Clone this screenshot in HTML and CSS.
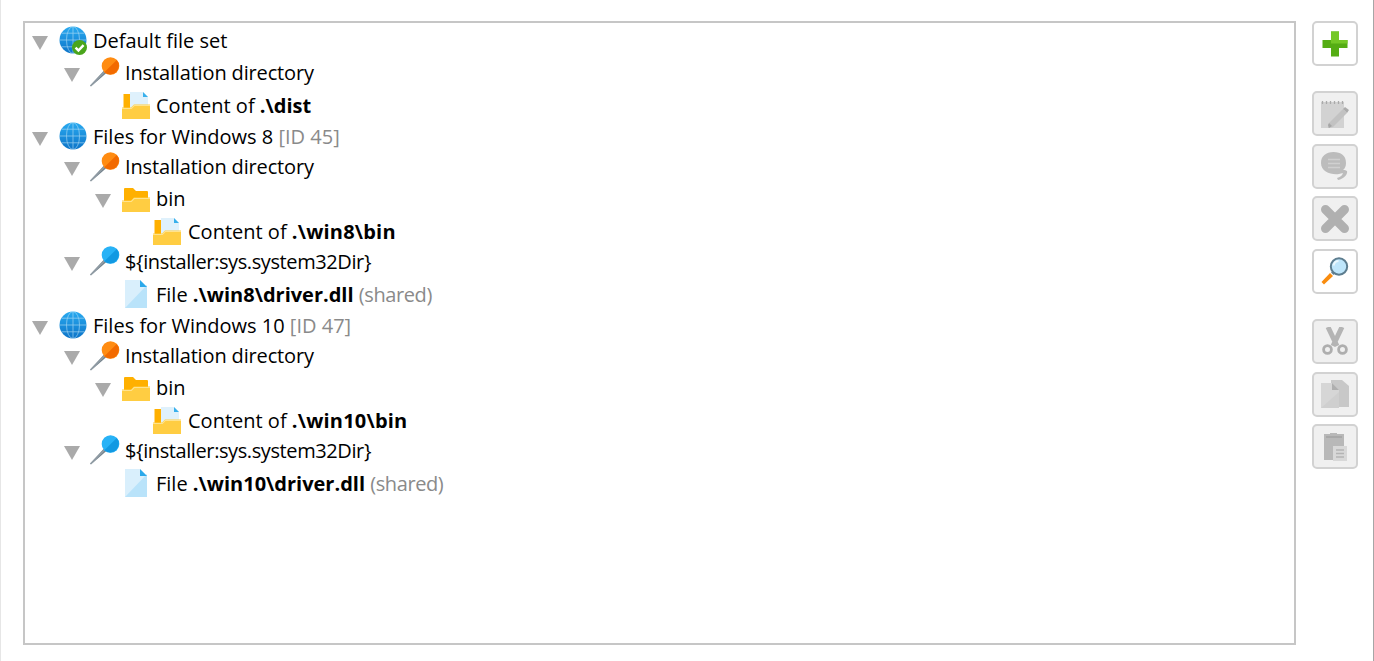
FILE: index.html
```html
<!DOCTYPE html>
<html lang="en">
<head>
<meta charset="utf-8">
<title>File sets</title>
<link rel="stylesheet" href="styles.css">
</head>
<body>
<svg class="defs" width="0" height="0" aria-hidden="true">
  <defs>
    <linearGradient id="gb" x1="0" y1="0" x2="0" y2="1"><stop offset="0" stop-color="#29aaf0"/><stop offset="1" stop-color="#0d74c8"/></linearGradient>
    <symbol id="globe" viewBox="0 0 28 28">
      <circle cx="14" cy="14" r="13.500" fill="url(#gb)"/>
      <g fill="none" stroke="#bfe4f8" stroke-width=".8" opacity=".7">
        <ellipse cx="14" cy="14" rx="6.500" ry="13.500"/>
        <path d="M14 .5v27M.5 14h27M2.600 7.200h22.800M2.600 20.800h22.800"/>
      </g>
    </symbol>
    <symbol id="pin-o" viewBox="0 0 30 30">
      <path d="M0 28.500 14.500 13 17 15.500 1 29.500z" fill="#76848e"/>
      <path d="M.7 28.800 15.500 14" stroke="#b4bdc3" stroke-width=".8"/>
      <circle cx="20.500" cy="9" r="8.800" fill="#ff8c12"/>
      <path d="M26.800 3A8.800 8.800 0 0 1 14.300 15.300z" fill="#f26a00"/>
    </symbol>
    <symbol id="pin-b" viewBox="0 0 30 30">
      <path d="M0 28.500 14.500 13 17 15.500 1 29.500z" fill="#76848e"/>
      <path d="M.7 28.800 15.500 14" stroke="#b4bdc3" stroke-width=".8"/>
      <circle cx="20.500" cy="9" r="8.800" fill="#28b2f6"/>
      <path d="M26.800 3A8.800 8.800 0 0 1 14.300 15.300z" fill="#1299e2"/>
    </symbol>
    <symbol id="folder" viewBox="0 0 28 24">
      <path d="M2 1q0-1 1-1h8l3 3h11q1 0 1 1v10H2z" fill="#ffb000"/>
      <path d="M0 24V12.500h9l3-3h16V24z" fill="#ffcd42"/>
      <path d="M0 13h9l3-3h16v1H12.500l-3 3H0z" fill="#ffe38e"/>
    </symbol>
    <symbol id="content" viewBox="0 0 28 27">
      <path d="M1.500 2h7v14h-7z" fill="#ffb000"/>
      <path d="M8 0h13l5 5v11H8z" fill="#dff1fc"/>
      <path d="M21 0l5 5h-5z" fill="#38b0ec"/>
      <path d="M0 27V15.500h9l3-3h16V27z" fill="#ffcd42"/>
      <path d="M0 16h9l3-3h16v1H12.500l-3 3H0z" fill="#ffe38e"/>
    </symbol>
    <symbol id="file" viewBox="0 0 22 28">
      <path d="M0 0h15l7 7v21H0z" fill="#d9effc"/>
      <path d="M0 28 22 5v23z" fill="#b9e3fa"/>
      <path d="M15 0l7 7h-7z" fill="#2aa8ea"/>
    </symbol>
  </defs>
</svg>

<main class="panel">
  <section class="tree">
    <div class="row r1"><span class="tri"></span><span class="icon"><svg class="i-globe"><use href="#globe"/></svg><svg class="badge" viewBox="0 0 14 14"><circle cx="7" cy="7" r="7" fill="#4aa51c"/><path d="M3.300 7.200 6 9.800l4.800-5" fill="none" stroke="#fff" stroke-width="2.300"/></svg></span><span class="label">Default file set</span></div>
    <div class="row r2 d1"><span class="tri"></span><span class="icon"><svg class="i-pin"><use href="#pin-o"/></svg></span><span class="label dirname">Installation directory</span></div>
    <div class="row r3 d2"><span class="tri none"></span><span class="icon"><svg class="i-folder"><use href="#content"/></svg></span><span class="label">Content of <b>.\dist</b></span></div>

    <div class="row r4"><span class="tri"></span><span class="icon"><svg class="i-globe"><use href="#globe"/></svg></span><span class="label">Files for Windows 8 <em>[ID 45]</em></span></div>
    <div class="row r5 d1"><span class="tri"></span><span class="icon"><svg class="i-pin"><use href="#pin-o"/></svg></span><span class="label dirname">Installation directory</span></div>
    <div class="row r6 d2"><span class="tri"></span><span class="icon"><svg class="i-folder-plain"><use href="#folder"/></svg></span><span class="label">bin</span></div>
    <div class="row r7 d3"><span class="tri none"></span><span class="icon"><svg class="i-folder"><use href="#content"/></svg></span><span class="label">Content of <b>.\win8\bin</b></span></div>
    <div class="row r8 d1"><span class="tri"></span><span class="icon"><svg class="i-pin"><use href="#pin-b"/></svg></span><span class="label varname">${installer:sys.system32Dir}</span></div>
    <div class="row r9 d2"><span class="tri none"></span><span class="icon"><svg class="i-file"><use href="#file"/></svg></span><span class="label">File <b>.\win8\driver.dll</b> <em>(shared)</em></span></div>

    <div class="row r4"><span class="tri"></span><span class="icon"><svg class="i-globe"><use href="#globe"/></svg></span><span class="label">Files for Windows 10 <em>[ID 47]</em></span></div>
    <div class="row r5 d1"><span class="tri"></span><span class="icon"><svg class="i-pin"><use href="#pin-o"/></svg></span><span class="label dirname">Installation directory</span></div>
    <div class="row r6 d2"><span class="tri"></span><span class="icon"><svg class="i-folder-plain"><use href="#folder"/></svg></span><span class="label">bin</span></div>
    <div class="row r7 d3"><span class="tri none"></span><span class="icon"><svg class="i-folder"><use href="#content"/></svg></span><span class="label">Content of <b>.\win10\bin</b></span></div>
    <div class="row r8 d1"><span class="tri"></span><span class="icon"><svg class="i-pin"><use href="#pin-b"/></svg></span><span class="label varname">${installer:sys.system32Dir}</span></div>
    <div class="row r9 d2"><span class="tri none"></span><span class="icon"><svg class="i-file"><use href="#file"/></svg></span><span class="label">File <b>.\win10\driver.dll</b> <em>(shared)</em></span></div>
  </section>

  <aside class="tools">
    <button class="btn" type="button" aria-label="Add"><svg viewBox="0 0 28 28"><path d="M10 1.500h8V10h8.500v8H18v8.500h-8V18H1.500v-8H10z" fill="#55ad14"/><path d="M10 1.500h8V10h8.500v3.500H10z" fill="#74c826"/></svg></button>
    <div class="group">
      <button class="btn off" type="button" aria-label="Edit"><svg viewBox="0 0 28 28"><path d="M0 2h23v26H0z" fill="#d2d2d2"/><path d="M1.500 1v3M5.500 1v3M9.500 1v3M13.500 1v3M17.500 1v3M21.500 1v3" stroke="#aaa" stroke-width="1.300"/><path d="M8 23 22 9l4 4-14 14-5 1z" fill="#c2c2c2"/><path d="M22 9l2-2 4 3-2 3z" fill="#acacac"/><path d="M7 25l1-2 3 3-3 2z" fill="#a6a6a6"/></svg></button>
      <button class="btn off" type="button" aria-label="Comment"><svg viewBox="0 0 28 28"><path d="M12.500 0C20 0 25 3.500 25 11c0 3-1 5.500-3 7 2.500 0 3 .5 4 1 1 3-3 8-9 9l-1-2c3-1 5-2 6-5l-4 1c-8 1-18-2-18-11C0 4 5 0 12.500 0z" fill="#bcbcbc"/><path d="M7 7.500h12M7 11.500h12M7 15.500h12" stroke="#d0d0d0" stroke-width="1.700"/></svg></button>
      <button class="btn off" type="button" aria-label="Delete"><svg viewBox="0 0 28 28"><path d="M4.500 4.500 23.500 23.500M23.500 4.500 4.500 23.500" stroke="#b0b0b0" stroke-width="9" stroke-linecap="round"/></svg></button>
      <button class="btn" type="button" aria-label="Find"><svg viewBox="0 0 28 28"><path d="M.5 25 9 16l3 3-9 8.500z" fill="#f98c0e"/><path d="M10 15.500l1.500-1.500 2.500 2.500-1.500 1.500z" fill="#6b8494"/><circle cx="18" cy="9.500" r="8.200" fill="#bfe6fb" stroke="#5d7d8f" stroke-width="2"/><path d="M12.500 8.500a5.500 5.500 0 0 1 5-4.500" stroke="#ebf8fe" stroke-width="2" fill="none"/></svg></button>
    </div>
    <div class="group">
      <button class="btn off" type="button" aria-label="Cut"><svg viewBox="0 0 28 28"><path d="M7 0 16 19M21 0 12 19" fill="none" stroke="#b4b4b4" stroke-width="5"/><circle cx="6.500" cy="22.500" r="3.900" fill="#f0f0f0" stroke="#aeaeae" stroke-width="2.800"/><circle cx="21.500" cy="22.500" r="3.900" fill="#f0f0f0" stroke="#aeaeae" stroke-width="2.800"/></svg></button>
      <button class="btn off" type="button" aria-label="Copy"><svg viewBox="0 0 28 28"><path d="M10 0h11l7 6v21H10z" fill="#c8c8c8"/><path d="M0 3h11l7 7v18H0z" fill="#d6d6d6"/><path d="M0 28 18 12v16z" fill="#cfcfcf"/><path d="M11 3l7 7h-7z" fill="#afafaf"/></svg></button>
      <button class="btn off" type="button" aria-label="Paste"><svg viewBox="0 0 28 28"><path d="M3 1h6V0h7v1h7v26H3z" fill="#b8b8b8"/><path d="M5 3h16v2H5z" fill="#a8a8a8"/><path d="M12 13h14v15H12z" fill="#d8d8d8"/><path d="M15 17h8M15 20.500h8M15 24h8" stroke="#b4b4b4" stroke-width="1.300"/></svg></button>
    </div>
  </aside>
</main>
</body>
</html>
```
FILE: styles.css
```css
* { box-sizing: border-box; }
html, body { margin: 0; height: 100%; }
body {
  background: #fff;
  font-family: "Open Sans", "Noto Sans", sans-serif;
  font-size: 20px;
  color: #000;
  overflow: hidden;
}
.defs { position: absolute; }
.panel {
  height: 661px;
  display: flex;
  align-items: flex-start;
  gap: 16px;
  padding: 21px 15px 0 22px;
  border-left: 1px solid #e6e6e6;
  border-right: 1px solid #a6a6a6;
}
.tree {
  flex: 1;
  height: 624px;
  border: 2px solid #c6c6c6;
  padding: 1px 0 0 5px;
}
.row {
  display: flex;
  align-items: center;
  height: 32px;
  white-space: nowrap;
}
.r3 { margin-top: 1px; }
.r4 { margin-top: -1px; }
.r5 { margin-top: -2px; }
.r6 { margin-top: 0; }
.r7 { margin-top: 1px; }
.r8 { margin-top: -2px; }
.r9 { margin-top: 1px; }
.d1 { padding-left: 32px; }
.d2 { padding-left: 63px; }
.d3 { padding-left: 95px; }
.tri {
  width: 0;
  height: 0;
  flex: none;
  margin: 5px 2px 0;
  border-left: 8px solid transparent;
  border-right: 8px solid transparent;
  border-top: 14px solid #aaa;
}
.tri.none { border-top-color: transparent; }
.icon {
  position: relative;
  flex: none;
  width: 30px;
  height: 30px;
  margin-left: 8px;
  display: flex;
  align-items: center;
  justify-content: center;
}
.d3 .icon { margin-left: 7px; }
.r6 .icon { margin-top: 4px; }
.r5 .icon { margin-top: 2px; }
.label { margin-left: 5px; }
.d3 .label { margin-left: 6px; }
.dirname { letter-spacing: -0.15px; }
.varname { letter-spacing: -0.4px; }
b { font-weight: 700; }
.r7 b { letter-spacing: 0.2px; }
em { font-style: normal; color: #8a8a8a; }
.r9 em { letter-spacing: -0.4px; }
.i-globe { width: 28px; height: 28px; }
.i-pin { width: 30px; height: 30px; }
.i-folder { width: 28px; height: 27px; }
.i-folder-plain { width: 28px; height: 24px; }
.i-file { width: 22px; height: 28px; }
.badge {
  position: absolute;
  right: 1px;
  bottom: 0;
  width: 15px;
  height: 15px;
}
.tools {
  flex: none;
  width: 46px;
  display: flex;
  flex-direction: column;
  gap: 25px;
}
.group {
  display: flex;
  flex-direction: column;
  gap: 7.670px;
}
.btn {
  width: 46px;
  height: 45px;
  padding: 0;
  background: #fff;
  border: 2px solid #d2d2d2;
  border-radius: 5px;
  display: flex;
  align-items: center;
  justify-content: center;
}
.btn svg { width: 28px; height: 28px; }
.btn.off { background: #f0f0f0; }
.btn.off svg { filter: blur(0.4px); }
```
